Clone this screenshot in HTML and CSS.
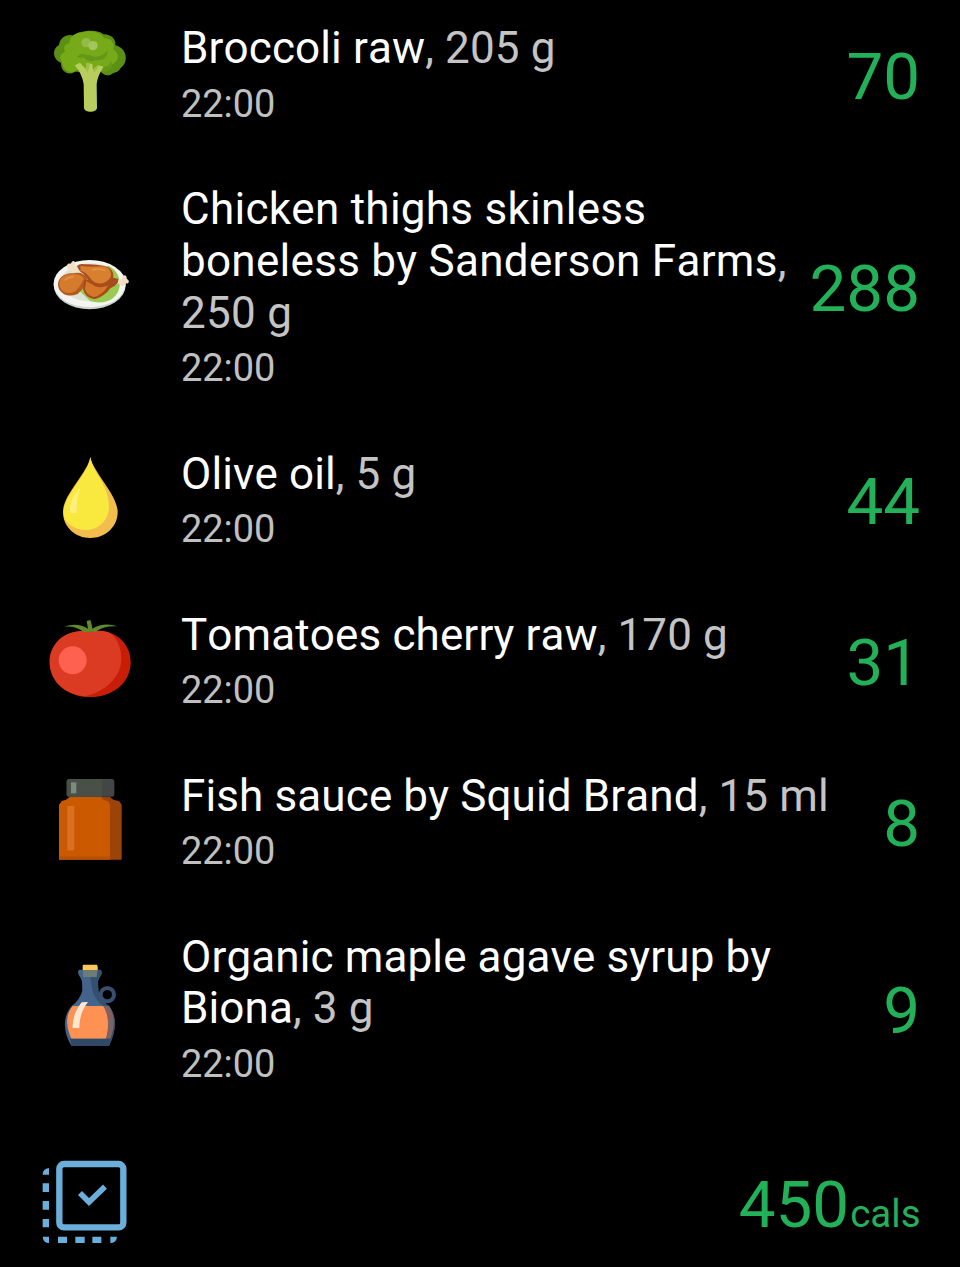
FILE: index.html
```
<!DOCTYPE html>
<html lang="en">
<head>
<meta charset="utf-8">
<title>Food log</title>
<link rel="stylesheet" href="styles.css">
</head>
<body>
<main class="log">
  <section class="entry">
    <svg class="icon" viewBox="0 3 300 300">
      <path fill="#5b9015" d="M63 129C35 117 38 83 57 76C59 51 83 40 101 47C122 29 175 28 190 43C213 42 229 58 226 76C260 83 269 126 241 145C236 158 220 158 212 164C200 169 191 164 184 157L105 155C87 168 62 156 63 129Z"/>
      <path fill="#76aa18" d="M66 124C54 110 65 99 75 96C67 78 81 70 88 70C90 45 111 36 133 37C155 28 190 41 192 55C214 54 226 72 220 88C241 100 236 125 217 133C213 151 196 157 181 151L110 150C94 165 66 151 66 124Z"/>
      <path fill="#629816" d="M111 113C122 93 135 107 150 106C170 116 190 107 204 91C203 112 187 124 168 120C150 130 137 117 130 112ZM177 132C203 151 213 131 211 122C223 133 211 154 187 151Z"/>
      <path fill="#b7ce5e" d="M104 136L120 128L137 147L139 130L157 132L159 149L174 135L191 140Q173 165 170 192L171 263C170 279 133 279 132 263L131 192Q126 161 104 136Z"/>
      <path fill="#a1bd4a" d="M137 147L139 130L151 130L143 158ZM159 149L174 135L180 136L162 158Z"/>
      <circle cx="138" cy="68" r="14" fill="#94bb48"/><circle cx="159" cy="77" r="14" fill="#a2c65d"/>
    </svg>
    <div class="details">
      <h2 class="name">Broccoli raw<span class="amount">, 205 g</span></h2>
      <p class="time">22:00</p>
    </div>
    <div class="value">70</div>
  </section>
  <section class="entry entry-long">
    <svg class="icon" viewBox="0 -20 300 300">
      <ellipse cx="149" cy="134" rx="108" ry="72" fill="#c9d3cc"/>
      <ellipse cx="149" cy="129" rx="108" ry="71" fill="#f4f5f0"/>
      <ellipse cx="151" cy="125" rx="89" ry="57" fill="#dce4d8"/>
      <path fill="#9bca53" d="M115 148L137 120L205 75Q240 92 239 135C235 173 198 194 151 182Z"/>
      <path fill="#f2dfc4" d="M99 96L84 86C77 71 85 65 93 70C96 55 109 61 105 75L116 95ZM227 118L246 115C244 99 263 101 260 114C271 119 267 131 257 128C252 141 238 135 238 128L225 133Z"/>
      <path fill="#b5591e" d="M98 98Q130 91 141 113Q138 139 113 160Q77 174 58 147C46 120 65 98 98 98Z"/>
      <path fill="#d57b2e" d="M89 101Q119 96 132 112Q122 140 101 155Q69 163 60 139C53 118 67 104 89 101Z"/>
      <path fill="#a64c1c" d="M133 119Q200 102 235 115Q237 132 211 143Q194 168 163 176Q135 171 129 145Z"/>
      <path fill="#d47729" d="M139 121Q165 141 205 134Q188 164 161 169Q139 162 135 144Z"/>
      <path fill="#a84e1d" d="M111 76Q119 67 135 71C165 71 200 74 211 84C231 101 216 137 184 140C153 141 143 113 130 99Q118 94 111 76Z"/>
      <path fill="#d97f30" d="M121 75Q143 80 183 77C207 77 219 94 211 111C193 136 161 132 149 110Q139 95 122 90Z"/>
      <path fill="none" stroke="#e89547" stroke-width="5" stroke-linecap="round" d="M158 87Q176 82 194 89M75 118Q86 108 99 109"/>
    </svg>
    <div class="details">
      <h2 class="name">Chicken thighs skinless boneless by Sanderson Farms<span class="amount">, 250 g</span></h2>
      <p class="time">22:00</p>
    </div>
    <div class="value">288</div>
  </section>
  <section class="entry">
    <svg class="icon" viewBox="0 0 300 300">
      <path fill="#f3bd4d" d="M151 30C158 74 233 143 233 195C233 240 196 273 151 273C106 273 69 240 69 195C69 143 144 76 151 30Z"/>
      <path fill="#f9e83e" d="M151 30C157 74 207 116 207 177C207 219 177 249 137 249C107 249 85 233 74 217C53 152 143 93 151 30Z"/>
      <path fill="#fff07d" d="M124 119Q108 146 110 196Q101 202 91 194C87 165 102 142 124 119Z"/>
    </svg>
    <div class="details">
      <h2 class="name">Olive oil<span class="amount">, 5 g</span></h2>
      <p class="time">22:00</p>
    </div>
    <div class="value">44</div>
  </section>
  <section class="entry">
    <svg class="icon" viewBox="0 -10 300 300">
      <path fill="#c81e08" d="M151 61C222 48 272 94 272 151C272 216 217 257 151 257C84 257 29 216 29 151C29 94 81 48 151 61Z"/>
      <path fill="#db3b23" d="M151 61C180 55 203 60 211 66C235 83 244 116 244 142C244 196 198 241 132 255C73 247 29 208 29 151C29 94 81 48 151 61Z"/>
      <circle cx="98" cy="147" r="42" fill="#ff6150"/>
      <path fill="#5f8c2d" d="M132 62Q107 42 72 46Q112 32 144 52L140 29L151 26Q156 39 157 52Q193 31 232 45Q194 42 167 61Z"/>
    </svg>
    <div class="details">
      <h2 class="name">Tomatoes cherry raw<span class="amount">, 170 g</span></h2>
      <p class="time">22:00</p>
    </div>
    <div class="value">31</div>
  </section>
  <section class="entry">
    <svg class="icon" viewBox="0 0 300 300">
      <path fill="#9c430a" d="M91 83H210Q219 94 237 96L245 107V272H57V108L66 96Q81 93 91 83Z"/>
      <path fill="#cb5900" d="M91 83H182Q189 94 205 97L210 107V263H57V108L66 96Q81 93 91 83Z"/>
      <path fill="#b65309" d="M57 263H211V272H57Z"/>
      <path fill="#da7023" d="M82 111H103V244H82Z"/>
      <rect x="80" y="30" width="143" height="53" rx="8" fill="#424644"/>
      <path fill="#485048" d="M88 30H186V83H88Q80 83 80 75V38Q80 30 88 30Z"/>
      <path fill="#7b8b7d" d="M93 40H109V73H93Z"/>
    </svg>
    <div class="details">
      <h2 class="name">Fish sauce by Squid Brand<span class="amount">, 15 ml</span></h2>
      <p class="time">22:00</p>
    </div>
    <div class="value">8</div>
  </section>
  <section class="entry">
    <svg class="icon" viewBox="0 0 300 300">
      <circle cx="202" cy="119" r="20" fill="none" stroke="#374f70" stroke-width="12"/>
      <path fill="#43638a" d="M117 44H182C192 56 177 65 174 79L175 107Q183 139 207 153C233 184 228 231 207 272H94C69 231 67 184 95 153Q119 135 127 107L126 79C123 65 108 56 117 44Z"/>
      <path fill="#34506f" d="M150 45H182C192 56 177 65 174 79L175 107Q183 139 207 153C233 184 228 231 207 272H190C214 225 211 180 190 153Q164 134 158 107L153 81Z"/>
      <path fill="#ff9153" d="M98 153H190C208 181 207 219 198 251H94C77 213 76 180 98 153Z"/>
      <path fill="#806263" d="M190 153H207C227 184 224 218 211 251H198C209 219 208 181 190 153Z"/>
      <path fill="#304966" d="M90 251H212L207 272H94Z"/>
      <path fill="#ffe7d4" d="M125 142L144 141Q117 176 118 219H98Q96 179 125 142Z"/>
      <path fill="#ffc65c" d="M132 29H169Q174 29 173 45H128V33Q128 29 132 29Z"/>
      <path fill="#6c7d75" d="M128 45H173L170 66H130Z"/>
    </svg>
    <div class="details">
      <h2 class="name">Organic maple agave syrup by Biona<span class="amount">, 3 g</span></h2>
      <p class="time">22:00</p>
    </div>
    <div class="value">9</div>
  </section>
  <footer class="summary">
    <svg class="select" viewBox="0 0 330 330">
      <rect x="88" y="45" width="192" height="190" rx="14" fill="none" stroke="#6aaed9" stroke-width="19"/>
      <path fill="none" stroke="#6aaed9" stroke-width="17" d="M150 132L177 159L225 113"/>
      <path fill="#6aaed9" d="M38 77Q38 59 57 57V77ZM38 103H57V129H38ZM38 156H57V182H38ZM38 210H57V235H38ZM38 263H57V282Q40 282 38 263ZM84 263H111V282H84ZM136 263H164V282H136ZM187 263H214V282H187ZM241 263H261Q259 282 241 282Z"/>
    </svg>
    <div class="total">450<span class="unit">cals</span></div>
  </footer>
</main>
</body>
</html>
```
FILE: styles.css
```
* { box-sizing: border-box; }
body {
  margin: 0;
  height: 1267px;
  overflow: hidden;
  background: #000;
  font-family: Roboto, sans-serif;
  font-kerning: none;
}
.log { margin-top: -7px; }
.entry {
  display: flex;
  align-items: center;
  padding: 30px 40px 25px;
}
.icon {
  flex: none;
  width: 100px;
  height: 100px;
  margin: -5px 41px 5px 0;
}
.details { flex: 1; min-width: 0; }
.name {
  margin: 0 0 7px;
  color: #fff;
  font-size: 44px;
  font-weight: 400;
  line-height: 51.8px;
  letter-spacing: 0.12px;
}
.entry-long .name { letter-spacing: 0.28px; }
.amount { color: #c4c4c4; }
.time {
  margin: 0;
  padding-bottom: 2px;
  color: #c0c0c0;
  font-size: 37.9px;
  line-height: 45.2px;
}
.value, .total {
  color: #22b158;
  font-size: 65.5px;
  line-height: 78px;
}
.value { flex: none; padding-top: 1px; }
.summary {
  display: flex;
  align-items: center;
  justify-content: space-between;
  padding: 35px 39.5px 0 30px;
}
.select { width: 110px; height: 110px; }
.total { padding-top: 10px; }
.unit { margin-left: 1px; font-size: 38.5px; }
```
